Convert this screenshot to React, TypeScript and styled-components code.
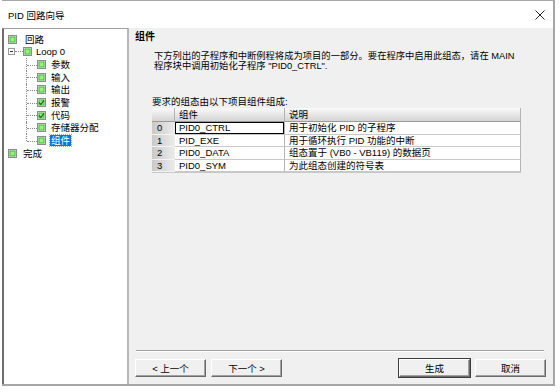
import { Fragment } from 'react';
import styled, { createGlobalStyle } from 'styled-components';

const GlobalStyle = createGlobalStyle`
  html, body {
    margin: 0;
    background: #ffffff;
  }
  body {
    font-family: "Liberation Sans", "Noto Sans CJK SC", sans-serif;
    font-size: 9.5px;
    color: #000;
  }
`;

const Window = styled.div`
  margin-left: 2px;
  width: 551px;
  height: 383px;
  border-top: 1px solid #a6a6a6;
  border-right: 2px solid #a6a6a6;
  border-bottom: 2px solid #a6a6a6;
  display: flex;
  flex-direction: column;
`;

const TitleBar = styled.div`
  height: 27px;
  background: #fff;
  display: flex;
  align-items: center;
  justify-content: space-between;
  padding: 0 8px 0 6px;
  font-size: 9.5px;
`;

const Content = styled.div`
  flex: 1;
  display: flex;
  background: #f0f0f0;
`;

const TreePanel = styled.div`
  width: 121px;
  background: #fff;
  border-left: 2px solid #6e6e6e;
  border-top: 1px solid #a0a0a0;
  border-right: 2px solid #b8b8b8;
  padding: 4px 0 0 2px;
`;

const TreeRow = styled.div`
  height: 12.67px;
  display: flex;
  align-items: center;
  white-space: nowrap;
`;

const Spacer = styled.span<{ w: number }>`
  width: ${p => p.w}px;
  flex: none;
`;

const Connector = styled.span<{ last?: boolean }>`
  position: relative;
  width: 11px;
  height: 100%;
  flex: none;
  margin-left: 20px;
  &::before {
    content: '';
    position: absolute;
    left: 0;
    top: 0;
    height: ${p => (p.last ? '50%' : '100%')};
    border-left: 1px dotted #8a8a8a;
  }
  &::after {
    content: '';
    position: absolute;
    left: 1px;
    right: 0;
    top: 50%;
    border-top: 1px dotted #8a8a8a;
  }
`;

const Expander = styled.span`
  position: relative;
  width: 7px;
  height: 7px;
  margin-left: 2px;
  border: 1px solid #9a9a9a;
  background: #fff;
  flex: none;
  box-sizing: border-box;
  &::before {
    content: '';
    position: absolute;
    left: 1px;
    right: 1px;
    top: 2px;
    border-top: 1px solid #333;
  }
`;

const Dash = styled.span`
  width: 8px;
  border-top: 1px dotted #8a8a8a;
  flex: none;
`;

const Label = styled.span<{ selected?: boolean; gap: number }>`
  margin-left: ${p => p.gap}px;
  padding: 0 1px;
  line-height: 11px;
  background: ${p => (p.selected ? '#0078d7' : 'transparent')};
  color: ${p => (p.selected ? '#fff' : '#000')};
  outline: ${p => (p.selected ? '1px dotted #f0a000' : 'none')};
`;

const Node = ({ checked }: { checked?: boolean }) => (
  <svg width="9" height="9" viewBox="0 0 9 9" style={{ flex: 'none' }}>
    <rect x="0.5" y="0.5" width="8" height="8" fill="#e8e8e8" stroke="#8c8c8c" />
    <rect x="1.5" y="1.5" width="6" height="6" fill="#36c236" />
    <rect x="2.5" y="2.5" width="4" height="4" fill="#9cf07a" />
    {checked && <path d="M2 4.5 L3.8 6.3 L7 2.5" fill="none" stroke="#137013" strokeWidth="1.2" />}
  </svg>
);

const RightPanel = styled.div`
  flex: 1;
  display: flex;
  flex-direction: column;
  padding: 2px 7px 7px 6px;
`;

const Heading = styled.div`
  font-family: "Noto Sans CJK SC", sans-serif;
  font-weight: bold;
  font-size: 10px;
  line-height: 12px;
`;

const Desc = styled.div`
  margin: 9px 0 0 19px;
  line-height: 10px;
  font-size: 9.3px;
  width: 370px;
`;

const Caption = styled.div`
  margin: 25px 0 0 17px;
  line-height: 12px;
`;

const Grid = styled.div`
  margin: 0 0 0 17px;
  width: 369px;
  display: grid;
  grid-template-columns: 23px 110px 236px;
  grid-auto-rows: 12.5px;
  grid-template-rows: 14px;
  border-bottom: 1px solid #c8c8c8;
`;

const HeadCell = styled.div`
  background: linear-gradient(#fafafa, #d4d4d4);
  border-right: 1px solid #b4b4b4;
  border-bottom: 1px solid #9a9a9a;
  padding-left: 4px;
  line-height: 13px;
`;

const IndexCell = styled.div`
  background: linear-gradient(to right, #c9c9c9, #ececec);
  border-bottom: 1px solid #f4f4f4;
  padding-left: 5px;
  line-height: 12px;
`;

const Cell = styled.div<{ focused?: boolean }>`
  background: #fff;
  border-right: 1px solid #b4b4b4;
  border-bottom: 1px solid #c8c8c8;
  padding-left: 4px;
  line-height: 11.5px;
  box-shadow: ${p => (p.focused ? 'inset 0 0 0 1px #000' : 'none')};
`;

const Fill = styled.div`
  flex: 1;
`;

const Separator = styled.div`
  margin: 0 2px 0 1px;
  border-top: 1px solid #a0a0a0;
  border-bottom: 1px solid #fff;
`;

const ButtonRow = styled.div`
  margin-top: 7px;
  display: flex;
  gap: 5px;
`;

const Button = styled.button<{ isDefault?: boolean }>`
  width: 71px;
  height: 18px;
  padding: 0;
  background: #f0f0f0;
  font-family: "Liberation Sans", "Noto Sans CJK SC", sans-serif;
  font-size: 9.5px;
  color: #000;
  border: 1px solid;
  border-color: #fff #6a6a6a #6a6a6a #fff;
  box-shadow: ${p => (p.isDefault ? '0 0 0 1px #3c3c3c, ' : '')}inset -1px -1px #a0a0a0;
`;

const Push = styled.div`
  flex: 1;
`;

const rows = [
  { name: 'PID0_CTRL', desc: '用于初始化 PID 的子程序' },
  { name: 'PID_EXE', desc: '用于循环执行 PID 功能的中断' },
  { name: 'PID0_DATA', desc: '组态置于 (VB0 - VB119) 的数据页' },
  { name: 'PID0_SYM', desc: '为此组态创建的符号表' },
];

const children = [
  { label: '参数' },
  { label: '输入' },
  { label: '输出' },
  { label: '报警', checked: true },
  { label: '代码', checked: true },
  { label: '存储器分配' },
  { label: '组件', selected: true },
];

const App = () => (
  <>
    <GlobalStyle />
    <Window>
      <TitleBar>
        <span>PID 回路向导</span>
        <svg width="10" height="10" viewBox="0 0 10 10">
          <path d="M0.5 0.5 L9.5 9.5 M9.5 0.5 L0.5 9.5" stroke="#222" strokeWidth="1" />
        </svg>
      </TitleBar>
      <Content>
        <TreePanel>
          <TreeRow>
            <Spacer w={2} />
            <Node />
            <Label gap={7}>回路</Label>
          </TreeRow>
          <TreeRow>
            <Expander />
            <Dash />
            <Node />
            <Label gap={3}>Loop 0</Label>
          </TreeRow>
          {children.map((c, i) => (
            <TreeRow key={c.label}>
              <Connector last={i === children.length - 1} />
              <Node checked={c.checked} />
              <Label gap={4} selected={c.selected}>{c.label}</Label>
            </TreeRow>
          ))}
          <TreeRow>
            <Spacer w={2} />
            <Node />
            <Label gap={5}>完成</Label>
          </TreeRow>
        </TreePanel>
        <RightPanel>
          <Heading>组件</Heading>
          <Desc>
            下方列出的子程序和中断例程将成为项目的一部分。要在程序中启用此组态，请在 MAIN
            程序块中调用初始化子程序 "PID0_CTRL".
          </Desc>
          <Caption>要求的组态由以下项目组件组成:</Caption>
          <Grid>
            <HeadCell />
            <HeadCell>组件</HeadCell>
            <HeadCell>说明</HeadCell>
            {rows.map((r, i) => (
              <Fragment key={r.name}>
                <IndexCell>{i}</IndexCell>
                <Cell focused={i === 0}>{r.name}</Cell>
                <Cell>{r.desc}</Cell>
              </Fragment>
            ))}
          </Grid>
          <Fill />
          <Separator />
          <ButtonRow>
            <Button>&lt; 上一个</Button>
            <Button>下一个 &gt;</Button>
            <Push />
            <Button isDefault>生成</Button>
            <Button>取消</Button>
          </ButtonRow>
        </RightPanel>
      </Content>
    </Window>
  </>
);

export default App;
